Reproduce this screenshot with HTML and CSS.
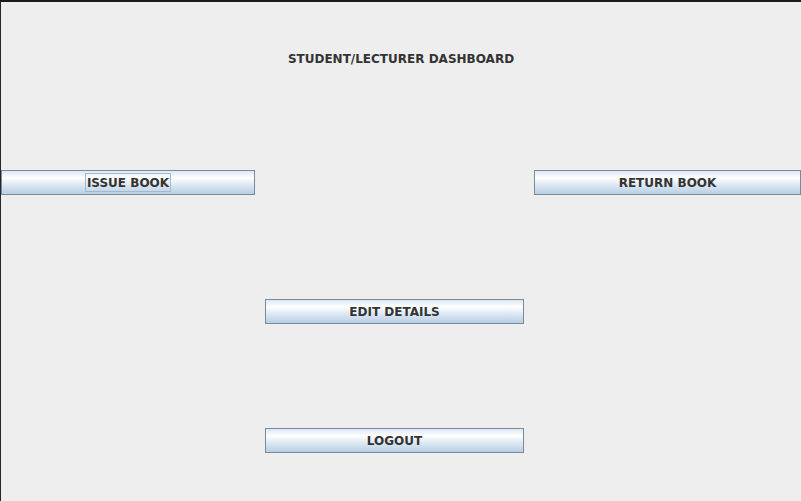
FILE: index.html
```html
<!DOCTYPE html>
<html>
<head>
<meta charset="utf-8">
<link rel="stylesheet" href="styles.css">
</head>
<body>
<div class="window">
  <div class="title">STUDENT/LECTURER DASHBOARD</div>
  <div class="row row-top">
    <button class="btn btn-issue"><span class="focus">ISSUE BOOK</span></button>
    <button class="btn btn-return">RETURN BOOK</button>
  </div>
  <div class="row row-center">
    <button class="btn btn-mid">EDIT DETAILS</button>
  </div>
  <div class="row row-center">
    <button class="btn btn-mid">LOGOUT</button>
  </div>
</div>
</body>
</html>
```
FILE: styles.css
```css
html, body {
  margin: 0;
  padding: 0;
  background: #eeeeee;
}
.window {
  width: 801px;
  height: 501px;
  box-sizing: border-box;
  border-top: 2px solid #1c1c1c;
  border-left: 1px solid #262626;
  background: #eeeeee;
  display: flex;
  flex-direction: column;
  font-family: "DejaVu Sans", sans-serif;
  font-weight: bold;
  font-size: 12px;
  color: #333333;
}
.title {
  margin-top: 50px;
  height: 15px;
  line-height: 15px;
  text-align: center;
}
.row {
  display: flex;
}
.row-top {
  margin-top: 103px;
  justify-content: space-between;
}
.row-center {
  margin-top: 104px;
  padding-left: 264px;
}
.btn {
  height: 25px;
  box-sizing: border-box;
  margin: 0;
  padding: 0;
  border: 1px solid #7a8a99;
  border-radius: 0;
  font-family: inherit;
  font-weight: bold;
  font-size: 12px;
  color: #333333;
  display: flex;
  align-items: center;
  justify-content: center;
  background: linear-gradient(to bottom,
    #dde8f3 0%, #ffffff 30%, #dde8f3 60%, #b8cfe5 100%);
}
.btn-issue {
  width: 254px;
}
.btn-return {
  width: 267px;
}
.btn-mid {
  width: 259px;
}
.focus {
  outline: 1px solid #a3b8cc;
  padding: 2px 1px 1px 1px;
  line-height: 14px;
}
```
